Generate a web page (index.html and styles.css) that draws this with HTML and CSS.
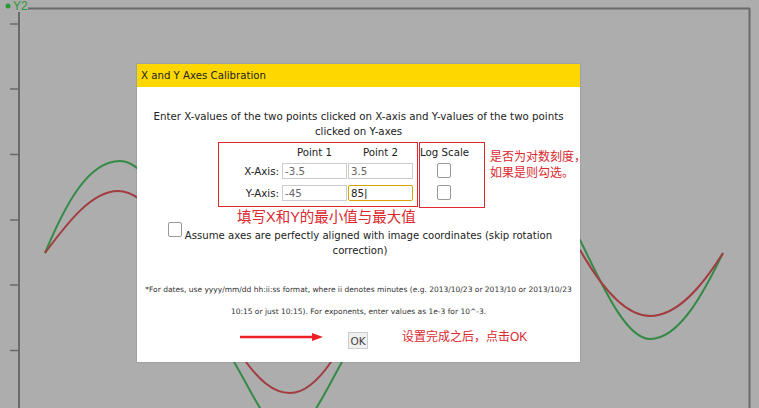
FILE: index.html
```html
<!DOCTYPE html>
<html lang="zh">
<head>
    <meta charset="UTF-8">
    <meta name="viewport" content="width=device-width, initial-scale=1.0">
    <title>X and Y Axes Calibration</title>
    <link rel="stylesheet" href="styles.css">
</head>
<body>
    <svg class="plot" width="759" height="408" viewBox="0 0 759 408">
        <g fill="none" stroke="#6a6a6a">
            <path d="M28 8.5H750M19 12V408M749.5 8V408" stroke-width="2"/>
            <path d="M10 24H19M10 89H19M10 154.500H19M10 220H19M10 285H19M10 350.500H19" stroke-width="1.500"/>
        </g>
        <path class="curve-green" d="M45 253C65 205 88 161 120 161C165 161 190 300 234 362C252 392 270 435 288 435C306 435 325 392 342 362C375 300 420 200 500 190C530 190 555 215 580 240C600 280 625 339 650 339C680 339 705 290 723 253"/>
        <path class="curve-red" d="M45 253C68 222 92 191 118 191C165 191 205 310 246 362C258 378 272 393 290 393C306 393 320 378 331 362C370 300 420 215 500 205C530 205 555 230 580 250C600 285 625 316 650 316C678 316 703 285 723 253"/>
        <circle cx="8" cy="6" r="2.500" fill="#2a9a35"/>
    </svg>
    <span class="y2-label">Y2</span>

    <div class="popup">
        <div class="popup-title">X and Y Axes Calibration</div>
        <div class="popup-body">
            <p class="intro">Enter X-values of the two points clicked on X-axis and Y-values of the two points clicked on Y-axes</p>
            <div class="axes-form">
                <span></span>
                <span class="col-head">Point 1</span>
                <span class="col-head">Point 2</span>
                <span class="col-head log-head">Log Scale</span>

                <label for="x1">X-Axis:</label>
                <input type="text" id="x1" value="-3.5">
                <input type="text" id="x2" value="3.5">
                <span class="check-cell"><span class="check"></span></span>

                <label for="y1">Y-Axis:</label>
                <input type="text" id="y1" value="-45">
                <input type="text" id="y2" class="focused" value="85|">
                <span class="check-cell"><span class="check"></span></span>
            </div>
            <p class="assume"><span class="check check-inline"></span>Assume axes are perfectly aligned with image coordinates (skip rotation correction)</p>
            <p class="note">*For dates, use yyyy/mm/dd hh:ii:ss format, where ii denotes minutes (e.g. 2013/10/23 or 2013/10 or 2013/10/23 10:15 or just 10:15). For exponents, enter values as 1e-3 for 10^-3.</p>
            <button type="button" class="ok-btn">OK</button>
        </div>
    </div>

    <!-- red notes drawn over the dialog -->
    <div class="mark mark-values"></div>
    <div class="mark mark-log"></div>
    <div class="note-red note-log">是否为对数刻度，<br>如果是则勾选。</div>
    <div class="note-red note-range">填写X和Y的最小值与最大值</div>
    <div class="note-red note-done">设置完成之后，点击OK</div>
    <svg class="arrow" width="84" height="10" viewBox="0 0 84 10">
        <path d="M0 5H72" stroke="#ee2024" stroke-width="2.500"/>
        <path d="M72 1L83 5L72 9Z" fill="#ee2024"/>
    </svg>
</body>
</html>
```

FILE: styles.css
```css
html, body {
    margin: 0;
    height: 408px;
    overflow: hidden;
}
body {
    position: relative;
    background-color: #adadad;
    font-family: "DejaVu Sans", Verdana, sans-serif;
    color: #222;
}
.plot {
    position: absolute;
    left: 0;
    top: 0;
}
.curve-green, .curve-red {
    fill: none;
    stroke-width: 2;
}
.curve-green {
    stroke: #338a45;
}
.curve-red {
    stroke: #a23c40;
}
.y2-label {
    position: absolute;
    left: 13px;
    top: 0;
    font-family: "Liberation Sans", sans-serif;
    font-size: 12px;
    line-height: 13px;
    color: #2a9a35;
}
.popup {
    position: absolute;
    left: 137px;
    top: 64px;
    width: 443px;
    height: 298px;
    background-color: white;
    box-shadow: 0 0 1px #666;
}
.popup-title {
    height: 23px;
    padding-left: 4px;
    background-color: #ffd700;
    font-size: 10.200px;
    line-height: 23px;
}
.popup-body {
    padding: 22px 8px 0;
    text-align: center;
    font-size: 10.250px;
}
.intro {
    margin: 0;
    line-height: 15px;
}
.axes-form {
    display: grid;
    grid-template-columns: 136px 65px 65px 60px;
    grid-template-rows: 16px 22px 22px;
    column-gap: 1px;
    align-items: center;
    margin-top: 5px;
}
.axes-form label {
    text-align: right;
    margin-right: 2px;
}
.col-head {
    text-align: center;
    white-space: nowrap;
}
.log-head {
    text-align: left;
    margin-left: 6px;
}
.axes-form input {
    width: 65px;
    height: 16px;
    padding: 0 2px;
    box-sizing: border-box;
    border: 1px solid #ccc;
    font-family: "DejaVu Sans", sans-serif;
    font-size: 10.250px;
    color: #666;
    outline: none;
}
.axes-form input.focused {
    border-color: #d9a400;
    border-radius: 2px;
    color: #222;
}
.check-cell {
    display: flex;
    justify-content: center;
    margin-bottom: 2px;
}
.check {
    display: inline-block;
    width: 14px;
    height: 15px;
    box-sizing: border-box;
    border: 1px solid #999;
    border-radius: 2px;
    background-color: white;
}
.assume {
    margin: 24px 0 0;
    padding-left: 3px;
    font-size: 10.150px;
    line-height: 15px;
}
.check-inline {
    margin: -13px 3px 0 0;
    vertical-align: middle;
}
.note {
    margin: 21px 0 0;
    font-size: 7.500px;
    line-height: 22px;
    color: #333;
}
.ok-btn {
    display: block;
    margin: 9px 0 0 203px;
    width: 20px;
    height: 17px;
    padding: 0;
    border: 1px solid #ccc;
    background-color: #f0f0f0;
    font-family: "DejaVu Sans", sans-serif;
    font-size: 10.500px;
    color: #444;
}
.mark {
    position: absolute;
    box-sizing: border-box;
    border: 1px solid #e0282e;
}
.mark-values {
    left: 218px;
    top: 142px;
    width: 200px;
    height: 65px;
}
.mark-log {
    left: 419px;
    top: 142px;
    width: 66px;
    height: 66px;
}
.note-red {
    position: absolute;
    font-family: "Liberation Sans", "Noto Sans CJK SC", sans-serif;
    color: #d9292f;
    white-space: nowrap;
}
.note-log {
    left: 490px;
    top: 149px;
    font-size: 12px;
    line-height: 16px;
}
.note-range {
    left: 237px;
    top: 207px;
    font-size: 14.500px;
    line-height: 20px;
}
.note-done {
    left: 402px;
    top: 327px;
    font-size: 12px;
    line-height: 20px;
}
.arrow {
    position: absolute;
    left: 240px;
    top: 332px;
}
```
